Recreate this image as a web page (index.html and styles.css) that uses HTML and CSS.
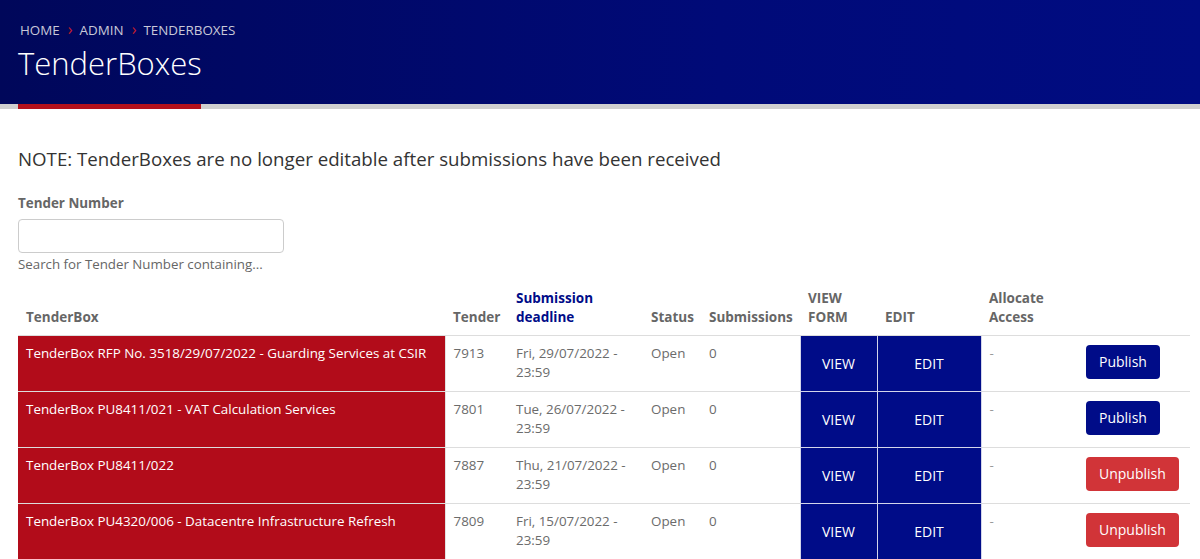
FILE: index.html
```html
<!DOCTYPE html>
<html>
<head>
<meta charset="utf-8">
<link rel="stylesheet" href="styles.css">
</head>
<body>
<header class="hero">
  <nav class="crumbs">
    <span>Home</span><span class="sep">&#x203A;</span><span>Admin</span><span class="sep">&#x203A;</span><span>TenderBoxes</span>
  </nav>
  <h1 class="title">TenderBoxes</h1>
</header>
<div class="rule"><span class="rule-accent"></span></div>
<main class="content">
  <p class="note">NOTE: TenderBoxes are no longer editable after submissions have been received</p>
  <div class="field">
    <label class="field-label">Tender Number</label>
    <input class="field-input" type="text">
    <div class="field-help">Search for Tender Number containing...</div>
  </div>
  <table class="grid">
    <colgroup>
      <col class="c-box"><col class="c-tender"><col class="c-deadline"><col class="c-status"><col class="c-subs"><col class="c-view"><col class="c-edit"><col class="c-alloc"><col class="c-btn">
    </colgroup>
    <thead>
      <tr>
        <th>TenderBox</th>
        <th>Tender</th>
        <th><a class="sort" href="#">Submission deadline</a></th>
        <th>Status</th>
        <th>Submissions</th>
        <th>VIEW FORM</th>
        <th>EDIT</th>
        <th>Allocate Access</th>
        <th></th>
      </tr>
    </thead>
    <tbody>
      <tr>
        <td class="box">TenderBox RFP No. 3518/29/07/2022 - Guarding Services at CSIR</td>
        <td>7913</td>
        <td>Fri, 29/07/2022 - 23:59</td>
        <td>Open</td>
        <td>0</td>
        <td class="act">VIEW</td>
        <td class="act">EDIT</td>
        <td class="dash">-</td>
        <td class="btn-cell"><button class="btn btn-pub">Publish</button></td>
      </tr>
      <tr>
        <td class="box">TenderBox PU8411/021 - VAT Calculation Services</td>
        <td>7801</td>
        <td>Tue, 26/07/2022 - 23:59</td>
        <td>Open</td>
        <td>0</td>
        <td class="act">VIEW</td>
        <td class="act">EDIT</td>
        <td class="dash">-</td>
        <td class="btn-cell"><button class="btn btn-pub">Publish</button></td>
      </tr>
      <tr>
        <td class="box">TenderBox PU8411/022</td>
        <td>7887</td>
        <td>Thu, 21/07/2022 - 23:59</td>
        <td>Open</td>
        <td>0</td>
        <td class="act">VIEW</td>
        <td class="act">EDIT</td>
        <td class="dash">-</td>
        <td class="btn-cell"><button class="btn btn-unpub">Unpublish</button></td>
      </tr>
      <tr>
        <td class="box">TenderBox PU4320/006 - Datacentre Infrastructure Refresh</td>
        <td>7809</td>
        <td>Fri, 15/07/2022 - 23:59</td>
        <td>Open</td>
        <td>0</td>
        <td class="act">VIEW</td>
        <td class="act">EDIT</td>
        <td class="dash">-</td>
        <td class="btn-cell"><button class="btn btn-unpub">Unpublish</button></td>
      </tr>
    </tbody>
  </table>
</main>
</body>
</html>
```
FILE: styles.css
```css
html, body {
  margin: 0;
  padding: 0;
  background: #fff;
  font-family: "Open Sans", "Noto Sans", sans-serif;
  color: #333;
}

.hero {
  box-sizing: border-box;
  height: 104px;
  padding: 20px 18px 0 18px;
  background: linear-gradient(to right, #00075a, #000a78 60%, #000c82);
}

.crumbs {
  display: flex;
  align-items: center;
  height: 20px;
  font-size: 13.4px;
  line-height: 20px;
  text-transform: uppercase;
  color: #c8c8d8;
  padding-left: 2px;
}

.crumbs .sep {
  color: #c81e2a;
  font-size: 16px;
  margin: 0 7px 0 8px;
  position: relative;
  top: -1px;
}

.title {
  margin: 3px 0 0 0;
  font-size: 31px;
  line-height: 40px;
  font-weight: 300;
  color: #fff;
  letter-spacing: 0;
}

.rule {
  height: 5px;
  background: #cfcfcf;
  display: flex;
}

.rule-accent {
  display: block;
  width: 183px;
  margin-left: 18px;
  background: #b4111b;
}

.content {
  padding: 0 10px 0 18px;
}

.note {
  margin: 37px 0 0 0;
  font-size: 18.7px;
  line-height: 26px;
  color: #333;
}

.field {
  margin-top: 21px;
}

.field-label {
  display: block;
  font-size: 13.4px;
  line-height: 20px;
  font-weight: 700;
  color: #666;
}

.field-input {
  display: block;
  box-sizing: border-box;
  margin-top: 6px;
  width: 266px;
  height: 34px;
  border: 1px solid #ccc;
  border-radius: 4px;
  background: #fff;
}

.field-help {
  margin-top: 2px;
  font-size: 13.3px;
  line-height: 18px;
  color: #666;
}

.grid {
  margin-top: 8px;
  width: 1172px;
  border-collapse: collapse;
  table-layout: fixed;
  font-size: 13.4px;
}

.c-box { width: 427px; }
.c-tender { width: 63px; }
.c-deadline { width: 135px; }
.c-status { width: 58px; }
.c-subs { width: 99px; }
.c-view { width: 77px; }
.c-edit { width: 104px; }
.c-alloc { width: 97px; }
.c-btn { width: 112px; }

.grid th {
  text-align: left;
  vertical-align: bottom;
  padding: 8px;
  font-size: 13.5px;
  line-height: 19px;
  font-weight: 700;
  color: #666;
  border-bottom: 1px solid #ddd;
}

.sort {
  color: #000c88;
  text-decoration: none;
}

.grid td {
  padding: 8px 8px 9px 8px;
  line-height: 19px;
  vertical-align: top;
  color: #6b6b6b;
  border-top: 1px solid #ddd;
}

.grid td.box {
  background: #b20c1a;
  color: #fff;
  border-right: 1px solid #e2e2e2;
}

.grid td.act {
  background: #000c88;
  color: #fff;
  font-size: 14px;
  text-align: center;
  vertical-align: middle;
  border-left: 1px solid #d3d5ea;
  border-right: 1px solid #d3d5ea;
  border-top: 1px solid #d3d5ea;
}

.grid td.dash {
  color: #999;
}

.grid td.btn-cell {
  vertical-align: middle;
  padding: 6px 8px 10px 8px;
}

.btn {
  font-family: "Open Sans", "Noto Sans", sans-serif;
  font-size: 14px;
  line-height: 20px;
  padding: 6px 12px;
  border-radius: 4px;
  color: #fff;
  border: 1px solid transparent;
  cursor: pointer;
}

.btn-pub {
  background: #000c88;
}

.btn-unpub {
  background: #d13438;
}
```
